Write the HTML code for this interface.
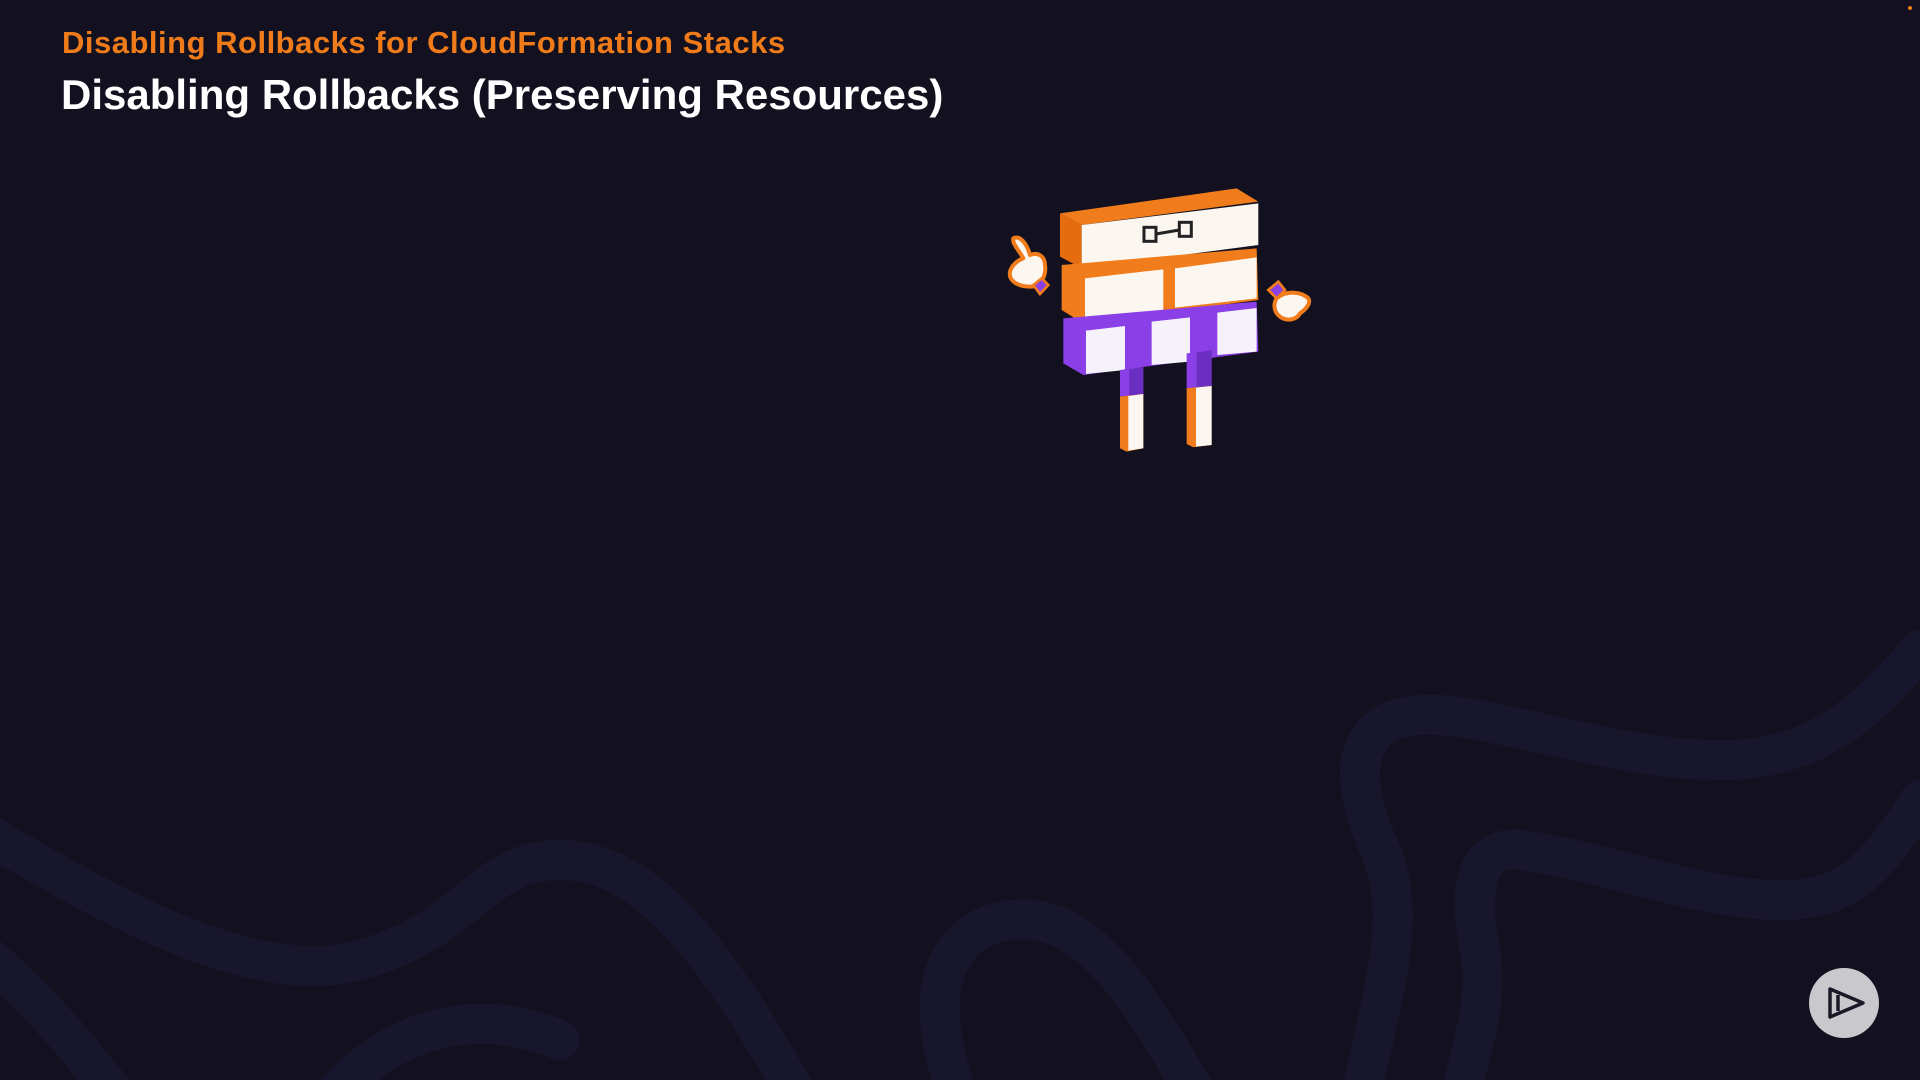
<!DOCTYPE html>
<html><head><meta charset="utf-8"><style>
html,body{margin:0;padding:0}
body{width:1920px;height:1080px;background:#13111f;position:relative;overflow:hidden;font-family:"Liberation Sans",sans-serif}
.t1{position:absolute;left:62px;top:25px;font-size:31px;font-weight:bold;color:#f07b1a;letter-spacing:0.5px;white-space:nowrap}
.t2{position:absolute;left:61px;top:71px;font-size:42px;font-weight:bold;color:#fff;letter-spacing:0px;white-space:nowrap}
</style></head><body>
<svg width="1920" height="1080" style="position:absolute;left:0;top:0">
<g fill="none" stroke="#18162c" stroke-width="40" stroke-linecap="round">
<path d="M-20,830 C100,900 250,990 360,960 C470,930 480,860 560,860 C650,860 720,960 800,1100"/>
<path d="M-20,950 C40,1000 80,1050 120,1100"/>
<path d="M330,1100 C380,1040 460,1000 560,1040"/>
<path d="M960,1100 C920,1000 940,930 1010,920 C1090,910 1140,1000 1200,1100"/>
<path d="M1920,650 C1860,720 1810,760 1720,760 C1620,760 1510,720 1440,715 C1360,710 1340,760 1380,850 C1410,920 1380,1000 1360,1100"/>
<path d="M1920,800 C1870,880 1840,900 1780,900 C1700,900 1600,860 1520,850 C1470,845 1470,900 1480,950 C1490,1000 1470,1050 1460,1100"/>
</g>
<circle cx="1844" cy="1003" r="35" fill="#c9c9cd"/>
<path d="M1830,989 L1863,1003 L1830,1017 Z M1838,995 L1838,1011" fill="none" stroke="#1a1826" stroke-width="3.5" stroke-linejoin="round"/>
<circle cx="1910" cy="8" r="2" fill="#f07b1a"/>
<g transform="translate(980,170) scale(0.3333)">
<path d="M240,130 L770,55 L835,95 L305,165 Z" fill="#f07c1c"/>
<path d="M240,130 L305,165 L305,295 L240,260 Z" fill="#e56d0f"/>
<path d="M305,165 L835,100 L835,225 L305,295 Z" fill="#fbf6ef"/>
<path d="M245,285 L830,235 L835,390 L310,460 L245,420 Z" fill="#f07c1c"/>
<path d="M315,325 L550,298 L550,420 L315,450 Z" fill="#fbf6ef"/>
<path d="M585,295 L830,262 L830,385 L585,413 Z" fill="#fbf6ef"/>
<path d="M250,445 L830,395 L835,545 L310,615 L250,580 Z" fill="#8b3fe6"/>
<path d="M318,482 L435,468 L435,600 L318,612 Z" fill="#f6f2fc"/>
<path d="M515,455 L630,442 L630,575 L515,585 Z" fill="#f6f2fc"/>
<path d="M712,428 L830,414 L830,545 L712,555 Z" fill="#f6f2fc"/>
<path d="M420,600 L490,590 L490,675 L420,680 Z" fill="#8b3fe6"/>
<path d="M448,598 L490,590 L490,675 L448,680 Z" fill="#6a2fc0"/>
<path d="M420,680 L490,672 L490,835 L440,845 L420,835 Z" fill="#f07c1c"/>
<path d="M445,678 L490,672 L490,835 L445,842 Z" fill="#fbf6ef"/>
<path d="M620,550 L695,540 L695,650 L620,655 Z" fill="#8b3fe6"/>
<path d="M650,548 L695,540 L695,650 L650,655 Z" fill="#6a2fc0"/>
<path d="M620,655 L695,648 L695,825 L640,832 L620,822 Z" fill="#f07c1c"/>
<path d="M648,653 L695,648 L695,825 L648,830 Z" fill="#fbf6ef"/>
<g fill="none" stroke="#222" stroke-width="9">
<rect x="492" y="172" width="36" height="42"/><rect x="598" y="157" width="36" height="42"/>
<path d="M528,192 L598,180"/></g>
<g stroke="#f07c1c" stroke-width="12" fill="#fbf6ef" stroke-linejoin="round">
<path d="M100,205 C120,195 140,220 150,255 C175,245 195,260 195,285 C200,320 180,350 150,350 C110,350 85,330 90,305 C95,285 115,270 130,265 C120,245 95,220 100,205 Z"/>
<path d="M890,385 C920,360 965,365 985,385 C995,400 975,420 960,430 C950,450 920,455 900,440 C880,425 880,400 890,385 Z"/>
</g>
<path d="M160,345 L185,325 L205,345 L180,372 Z" fill="#8b3fe6" stroke="#f07c1c" stroke-width="8"/>
<path d="M865,360 L895,335 L915,360 L890,385 Z" fill="#8b3fe6" stroke="#f07c1c" stroke-width="8"/>
</g>
</svg>
<div class="t1">Disabling Rollbacks for CloudFormation Stacks</div>
<div class="t2">Disabling Rollbacks (Preserving Resources)</div>
</body></html>
